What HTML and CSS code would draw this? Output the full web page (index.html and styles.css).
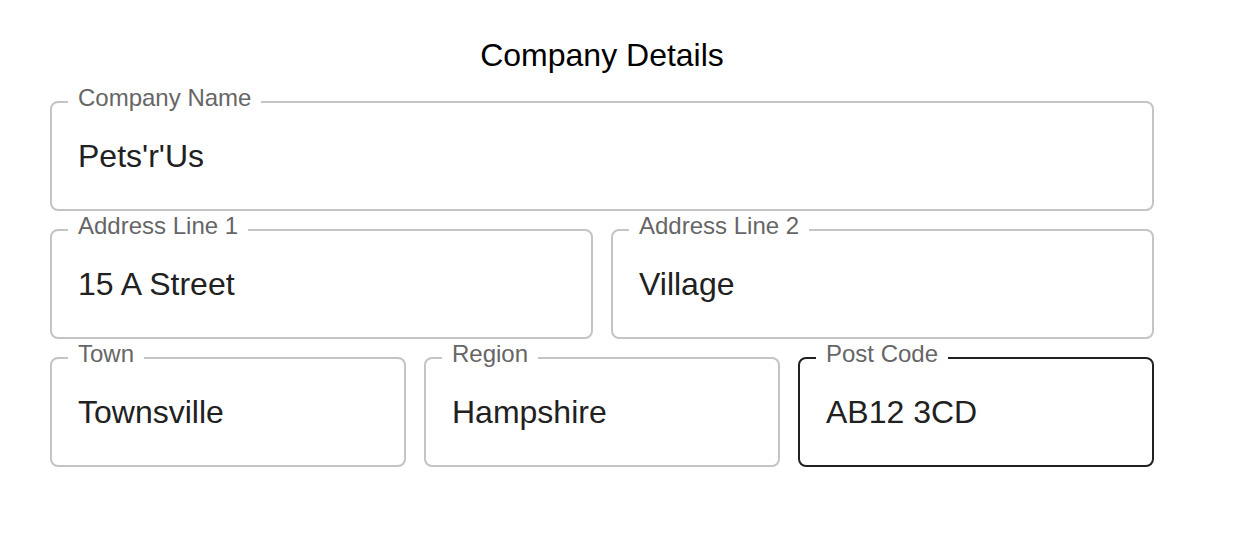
FILE: index.html
```html
<!DOCTYPE html>
<html lang="en">

<head>
    <meta charset="UTF-8">
    <meta name="viewport" content="width=device-width, initial-scale=1.0">
    <title>Company Details</title>
    <link rel="stylesheet" href="styles.css">
</head>

<body>
    <main class="form">
        <h1 class="title">Company Details</h1>

        <div class="row">
            <fieldset class="field">
                <legend>Company Name</legend>
                <div class="value">Pets'r'Us</div>
            </fieldset>
        </div>

        <div class="row two">
            <fieldset class="field">
                <legend>Address Line 1</legend>
                <div class="value">15 A Street</div>
            </fieldset>
            <fieldset class="field">
                <legend>Address Line 2</legend>
                <div class="value">Village</div>
            </fieldset>
        </div>

        <div class="row three">
            <fieldset class="field">
                <legend>Town</legend>
                <div class="value">Townsville</div>
            </fieldset>
            <fieldset class="field">
                <legend>Region</legend>
                <div class="value">Hampshire</div>
            </fieldset>
            <fieldset class="field active">
                <legend>Post Code</legend>
                <div class="value">AB12 3CD</div>
            </fieldset>
        </div>
    </main>
</body>

</html>
```

FILE: styles.css
```css
* {
    margin: 0;
    padding: 0;
    box-sizing: border-box;
}

body {
    background-color: white;
    font-family: "Liberation Sans", Arial, sans-serif;
}

.form {
    width: 1104px;
    margin-left: 50px;
    padding-top: 36px;
    display: flex;
    flex-direction: column;
    gap: 1px;
}

.title {
    font-size: 32px;
    font-weight: normal;
    line-height: 38px;
    text-align: center;
    color: black;
    margin-bottom: 9px;
}

.row {
    display: grid;
    grid-template-columns: 1fr;
    gap: 18px;
}

.row.two {
    grid-template-columns: 1fr 1fr;
}

.row.three {
    grid-template-columns: 1fr 1fr 1fr;
}

.field {
    height: 127px;
    border: 2px solid #c4c4c4;
    border-radius: 8px;
    padding: 0 16px;
    min-width: 0;
}

.field.active {
    border-color: #212121;
}

.field legend {
    font-size: 24px;
    line-height: 28px;
    padding: 0 10px 8px;
    color: #666666;
}

.value {
    padding: 18px 0 0 10px;
    font-size: 32px;
    line-height: 37px;
    color: #212121;
}
```
